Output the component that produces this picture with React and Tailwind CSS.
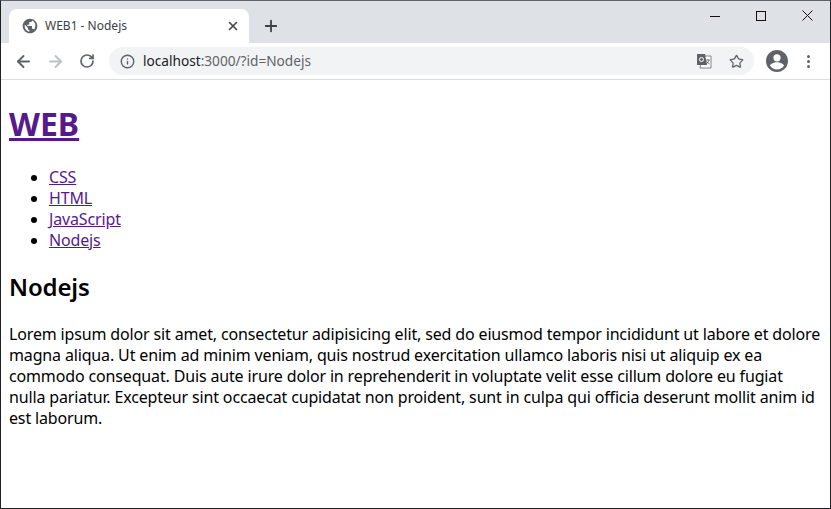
import React from 'react';
import { ArrowLeft, ArrowRight, RotateCw, Info, Star, X, Plus } from 'lucide-react';

const links = ['CSS', 'HTML', 'JavaScript', 'Nodejs'];

const GlobeIcon = () => (
  <svg width="16" height="16" viewBox="0 0 24 24" fill="#5f6368">
    <path d="M12 1C5.9 1 1 5.900 1 12s4.900 11 11 11 11-4.900 11-11S18.100 1 12 1zm-1 19.500c-3.900-.5-7-3.900-7-8 0-.9.150-1.700.4-2.500L9 15v1c0 1.100.9 2 2 2v2.500zm7-3.100c-.3-.8-1-1.400-1.900-1.400h-1v-3c0-.5-.5-1-1-1H8v-2h2c.5 0 1-.5 1-1V6h2c1.100 0 2-.9 2-2v-.4c3 1.200 5 4.100 5 7.400 0 2.600-.800 4.900-2 6.400z" />
  </svg>
);

const AccountIcon = () => (
  <svg width="24" height="24" viewBox="0 0 24 24" fill="#5f6368">
    <path d="M12 1C5.92 1 1 5.92 1 12s4.92 11 11 11 11-4.92 11-11S18.08 1 12 1zm0 4.2a3.6 3.6 0 1 1 0 7.2 3.6 3.6 0 0 1 0-7.2zm0 15.4c-2.9 0-5.45-1.48-6.95-3.73.04-2.3 4.63-3.57 6.95-3.57s6.91 1.27 6.95 3.57A8.35 8.35 0 0 1 12 20.6z" />
  </svg>
);

const TranslateIcon = () => (
  <svg width="16" height="16" viewBox="0 0 16 16">
    <path d="M6 3h9v12H4z" fill="#fff" stroke="#80868b" />
    <path d="M1 1h8l2 11H1z" fill="#5f6368" />
    <circle cx="5.5" cy="6.5" r="2" fill="none" stroke="#fff" strokeWidth="1" />
    <path d="M10 7h4M12 6v1M13 7c-.5 2-1.5 3.500-3 4M10.500 8c.5 1.500 1.500 2.500 3 3" fill="none" stroke="#5f6368" strokeWidth=".8" />
  </svg>
);

const MinimizeIcon = () => (
  <svg width="10" height="10" viewBox="0 0 10 10" fill="none" stroke="#111">
    <path d="M0 5.500h10" />
  </svg>
);

const MaximizeIcon = () => (
  <svg width="10" height="10" viewBox="0 0 10 10" fill="none" stroke="#111">
    <rect x=".5" y=".5" width="9" height="9" />
  </svg>
);

const CloseIcon = () => (
  <svg width="11" height="11" viewBox="0 0 11 11" fill="none" stroke="#111">
    <path d="M.5.500l10 10M10.500.500l-10 10" />
  </svg>
);

export default function App() {
  return (
    <div className="w-[831px] h-[509px] overflow-hidden bg-white border-x border-t border-b border-x-[#202124] border-t-[#5f6368] border-b-[#202124] flex flex-col font-['Noto_Sans','Open_Sans',sans-serif]">
      {/* tab strip */}
      <div className="h-[42px] shrink-0 bg-[#dee1e6] flex items-end pl-2">
        <div className="w-[240px] h-[34px] bg-white rounded-t-lg flex items-center pl-[13px] pr-[9px]">
          <GlobeIcon />
          <span className="ml-[7px] text-xs text-[#3c4043] flex-1">WEB1 - Nodejs</span>
          <X size={14} strokeWidth={2.8} color="#45484c" />
        </div>
        <div className="w-[44px] h-[34px] flex items-center justify-center">
          <Plus size={18} strokeWidth={2.4} color="#3c4043" />
        </div>
        <div className="ml-auto self-start flex items-center h-[29px]">
          <div className="w-[46px] flex justify-center"><MinimizeIcon /></div>
          <div className="w-[46px] flex justify-center"><MaximizeIcon /></div>
          <div className="w-[46px] flex justify-center"><CloseIcon /></div>
        </div>
      </div>

      {/* toolbar */}
      <div className="h-[37px] shrink-0 bg-white border-b border-[#dadce0] flex items-center pl-[8px]">
        <div className="w-[28px] flex justify-center"><ArrowLeft size={19} strokeWidth={2.4} color="#5f6368" /></div>
        <div className="ml-[4px] w-[28px] flex justify-center"><ArrowRight size={19} strokeWidth={2.4} color="#bdc1c6" /></div>
        <div className="ml-[4px] w-[28px] flex justify-center"><RotateCw size={16} strokeWidth={2.6} color="#5f6368" /></div>
        <div className="ml-[8px] w-[645px] h-[28px] rounded-full bg-[#f1f3f4] flex items-center pl-[11px] pr-[10px]">
          <Info size={15} strokeWidth={2.2} color="#5f6368" />
          <span className="ml-[8px] text-[13.65px] text-[#202124] flex-1">
            localhost<span className="text-[#5f6368]">:3000/?id=Nodejs</span>
          </span>
          <TranslateIcon />
          <Star size={15} strokeWidth={2} color="#5f6368" className="ml-[17px]" />
        </div>
        <div className="ml-[11px]"><AccountIcon /></div>
        <div className="ml-[18px] flex flex-col gap-[2px]">
          <span className="w-[3px] h-[3px] rounded-full bg-[#5f6368]" />
          <span className="w-[3px] h-[3px] rounded-full bg-[#5f6368]" />
          <span className="w-[3px] h-[3px] rounded-full bg-[#5f6368]" />
        </div>
      </div>

      {/* page */}
      <div className="flex-1 px-2 text-black text-base leading-[21px] tracking-[-0.15px]">
        <h1 className="mt-[23px] text-[32px] leading-[42px] font-bold tracking-normal">
          <a href="#" className="underline text-[#551a8b]">WEB</a>
        </h1>
        <ul className="mt-[22px] pl-10 list-disc">
          {links.map((l) => (
            <li key={l}><a href="#" className="underline text-[#551a8b]">{l}</a></li>
          ))}
        </ul>
        <h2 className="mt-[20px] text-2xl leading-[32px] font-semibold">Nodejs</h2>
        <p className="mt-[21px]">
          Lorem ipsum dolor sit amet, consectetur adipisicing elit, sed do eiusmod tempor incididunt ut labore et dolore magna aliqua. Ut enim ad minim veniam, quis nostrud exercitation ullamco laboris nisi ut aliquip ex ea commodo consequat. Duis aute irure dolor in reprehenderit in voluptate velit esse cillum dolore eu fugiat nulla pariatur. Excepteur sint occaecat cupidatat non proident, sunt in culpa qui officia deserunt mollit anim id est laborum.
        </p>
      </div>
    </div>
  );
}
